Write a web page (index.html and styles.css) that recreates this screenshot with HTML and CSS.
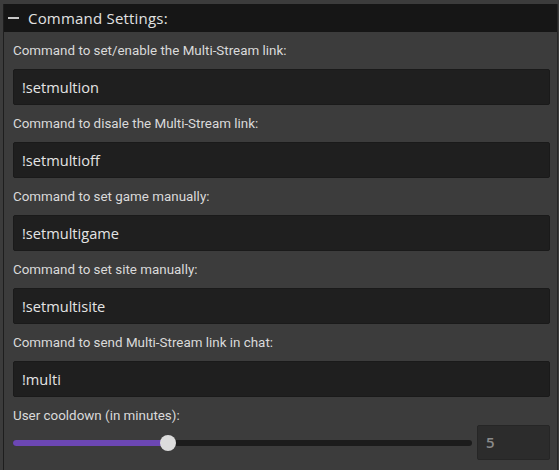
FILE: index.html
```html
<!DOCTYPE html>
<html>
<head>
<meta charset="utf-8">
<link rel="stylesheet" href="styles.css">
</head>
<body>
<div class="panel">
  <div class="header">
    <span class="collapse"></span>
    <span class="title">Command Settings:</span>
  </div>
  <div class="content">
    <div class="label">Command to set/enable the Multi-Stream link:</div>
    <div class="input">!setmultion</div>
    <div class="label">Command to disale the Multi-Stream link:</div>
    <div class="input">!setmultioff</div>
    <div class="label">Command to set game manually:</div>
    <div class="input">!setmultigame</div>
    <div class="label">Command to set site manually:</div>
    <div class="input">!setmultisite</div>
    <div class="label">Command to send Multi-Stream link in chat:</div>
    <div class="input">!multi</div>
    <div class="label">User cooldown (in minutes):</div>
    <div class="slider-row">
      <div class="slider">
        <div class="track"><div class="fill" style="width: 155px"></div></div>
        <div class="thumb" style="left: 155px"></div>
      </div>
      <div class="number">5</div>
    </div>
  </div>
</div>
</body>
</html>
```

FILE: styles.css
```css
html, body {
  margin: 0;
  padding: 0;
  background: #3c3c3c;
  height: 100%;
  overflow: hidden;
}
body {
  padding-top: 4px;
  box-sizing: border-box;
}
.panel {
  margin: 0 1px 0 3px;
  border-left: 1px solid #1e1e1e;
  border-right: 1px solid #262626;
  min-height: 470px;
}
.header {
  height: 28px;
  background: #161616;
  display: flex;
  align-items: center;
}
.collapse {
  width: 11px;
  height: 2px;
  background: #c8c8c8;
  margin-left: 4px;
  margin-right: 9px;
}
.title {
  font-family: "Open Sans", sans-serif;
  font-size: 15px;
  font-weight: 500;
  color: #e2e2e2;
  letter-spacing: 0.2px;
}
.content {
  padding: 0 7px 0 9px;
}
.label {
  font-family: Roboto, "Liberation Sans", sans-serif;
  font-size: 13.4px;
  font-weight: 400;
  color: #dadada;
  height: 37px;
  line-height: 37px;
}
.input {
  height: 36px;
  box-sizing: border-box;
  background: #1f1f1f;
  border: 1px solid #1a1a1a;
  border-radius: 2px;
  padding-left: 8px;
  font-family: "Open Sans", sans-serif;
  font-size: 14.6px;
  font-weight: 500;
  color: #e4e4e4;
  line-height: 34px;
}
.slider-row {
  display: flex;
  align-items: center;
  gap: 5px;
  margin-top: -9px;
}
.slider {
  flex: 1;
  position: relative;
  height: 16px;
  display: flex;
  align-items: center;
}
.track {
  width: 100%;
  height: 6px;
  border-radius: 3px;
  background: #1c1c1c;
  overflow: hidden;
}
.fill {
  height: 100%;
  background: #6c47b4;
}
.thumb {
  position: absolute;
  top: 0;
  width: 16px;
  height: 16px;
  margin-left: -8px;
  border-radius: 50%;
  background: #dcdcdc;
}
.number {
  width: 73px;
  height: 35px;
  box-sizing: border-box;
  background: #2c2c2c;
  border: 1px solid #262626;
  border-radius: 2px;
  padding-left: 8px;
  font-family: "Open Sans", sans-serif;
  font-size: 15px;
  font-weight: 600;
  color: #8a8a8a;
  line-height: 33px;
}
```
